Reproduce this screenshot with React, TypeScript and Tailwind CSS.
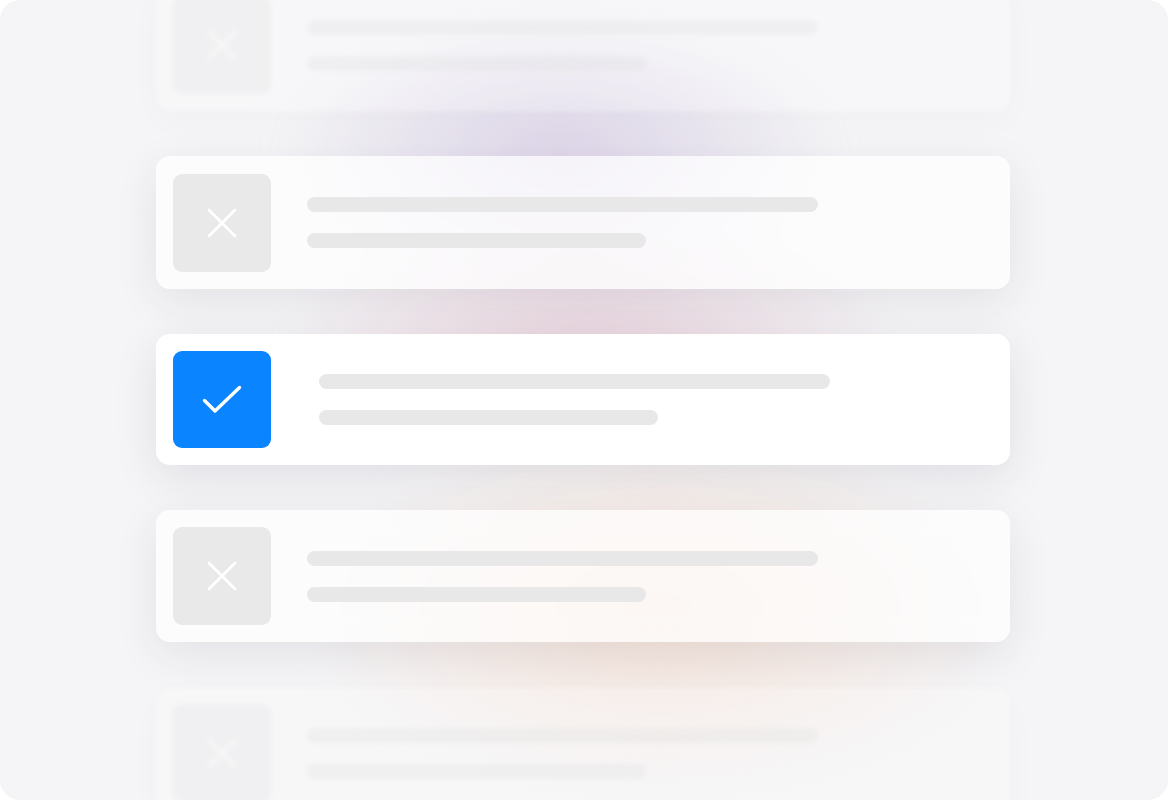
import React from "react";

type Row = { state: "faded" | "idle" | "active"; h: string };

const rows: Row[] = [
  { state: "faded", h: "h-[132px]" },
  { state: "idle", h: "h-[133px]" },
  { state: "active", h: "h-[131px]" },
  { state: "idle", h: "h-[132px]" },
  { state: "faded", h: "h-[132px]" },
];

const CrossIcon = () => (
  <svg width="32" height="32" viewBox="0 0 32 32" fill="none">
    <path d="M3 3L29 29M29 3L3 29" stroke="white" strokeWidth="2.8" strokeLinecap="round" />
  </svg>
);

const CheckIcon = () => (
  <svg width="40" height="30" viewBox="0 0 40 30" fill="none">
    <path d="M2.5 15.5L13 26L37.5 2.5" stroke="white" strokeWidth="3.4" strokeLinecap="round" strokeLinejoin="round" />
  </svg>
);

const OptionCard: React.FC<Row> = ({ state, h }) => {
  const active = state === "active";
  const faded = state === "faded";

  const base = "flex w-[854px] shrink-0 items-center rounded-[14px] px-[17px] " + h;

  return (
    <div
      className={
        active
          ? base + " gap-[48px] bg-white shadow-[0_12px_44px_rgba(40,30,60,0.10)]"
          : faded
          ? base + " gap-[36px] bg-white/50 opacity-40 blur-[2px] shadow-[0_12px_40px_rgba(40,30,60,0.06)]"
          : base + " gap-[36px] bg-white/70 backdrop-blur-md shadow-[0_12px_44px_rgba(40,30,60,0.09)]"
      }
    >
      <div
        className={
          active
            ? "flex h-[97px] w-[98px] shrink-0 items-center justify-center rounded-[9px] bg-[#0a84ff]"
            : "flex h-[98px] w-[98px] shrink-0 items-center justify-center rounded-[9px] bg-[#e9e9ea]"
        }
      >
        {active ? <CheckIcon /> : <CrossIcon />}
      </div>
      <div className="flex flex-col gap-[21px]">
        <div className="h-[15px] w-[511px] rounded-full bg-[#e8e8e9]" />
        <div className="h-[15px] w-[339px] rounded-full bg-[#e8e8e9]" />
      </div>
    </div>
  );
};

export default function App() {
  return (
    <div className="min-h-screen bg-white">
      <div className="relative h-[800px] w-[1168px] overflow-hidden rounded-[20px] bg-[#f5f5f7]">
        {/* soft coloured glows behind the list */}
        <div className="pointer-events-none absolute left-[280px] top-[20px] h-[260px] w-[560px] rounded-full bg-[radial-gradient(closest-side,rgba(200,185,220,0.55),rgba(200,185,220,0))] blur-[20px]" />
        <div className="pointer-events-none absolute left-[280px] top-[220px] h-[240px] w-[620px] rounded-full bg-[radial-gradient(closest-side,rgba(225,190,205,0.6),rgba(225,190,205,0))] blur-[20px]" />
        <div className="pointer-events-none absolute left-[300px] top-[430px] h-[360px] w-[720px] rounded-full bg-[radial-gradient(closest-side,rgba(245,215,195,0.6),rgba(245,215,195,0))] blur-[20px]" />

        <div className="relative mt-[-21px] flex flex-col gap-[45px] pl-[156px]">
          {rows.map((r, i) => (
            <OptionCard key={i} state={r.state} h={r.h} />
          ))}
        </div>
      </div>
    </div>
  );
}
